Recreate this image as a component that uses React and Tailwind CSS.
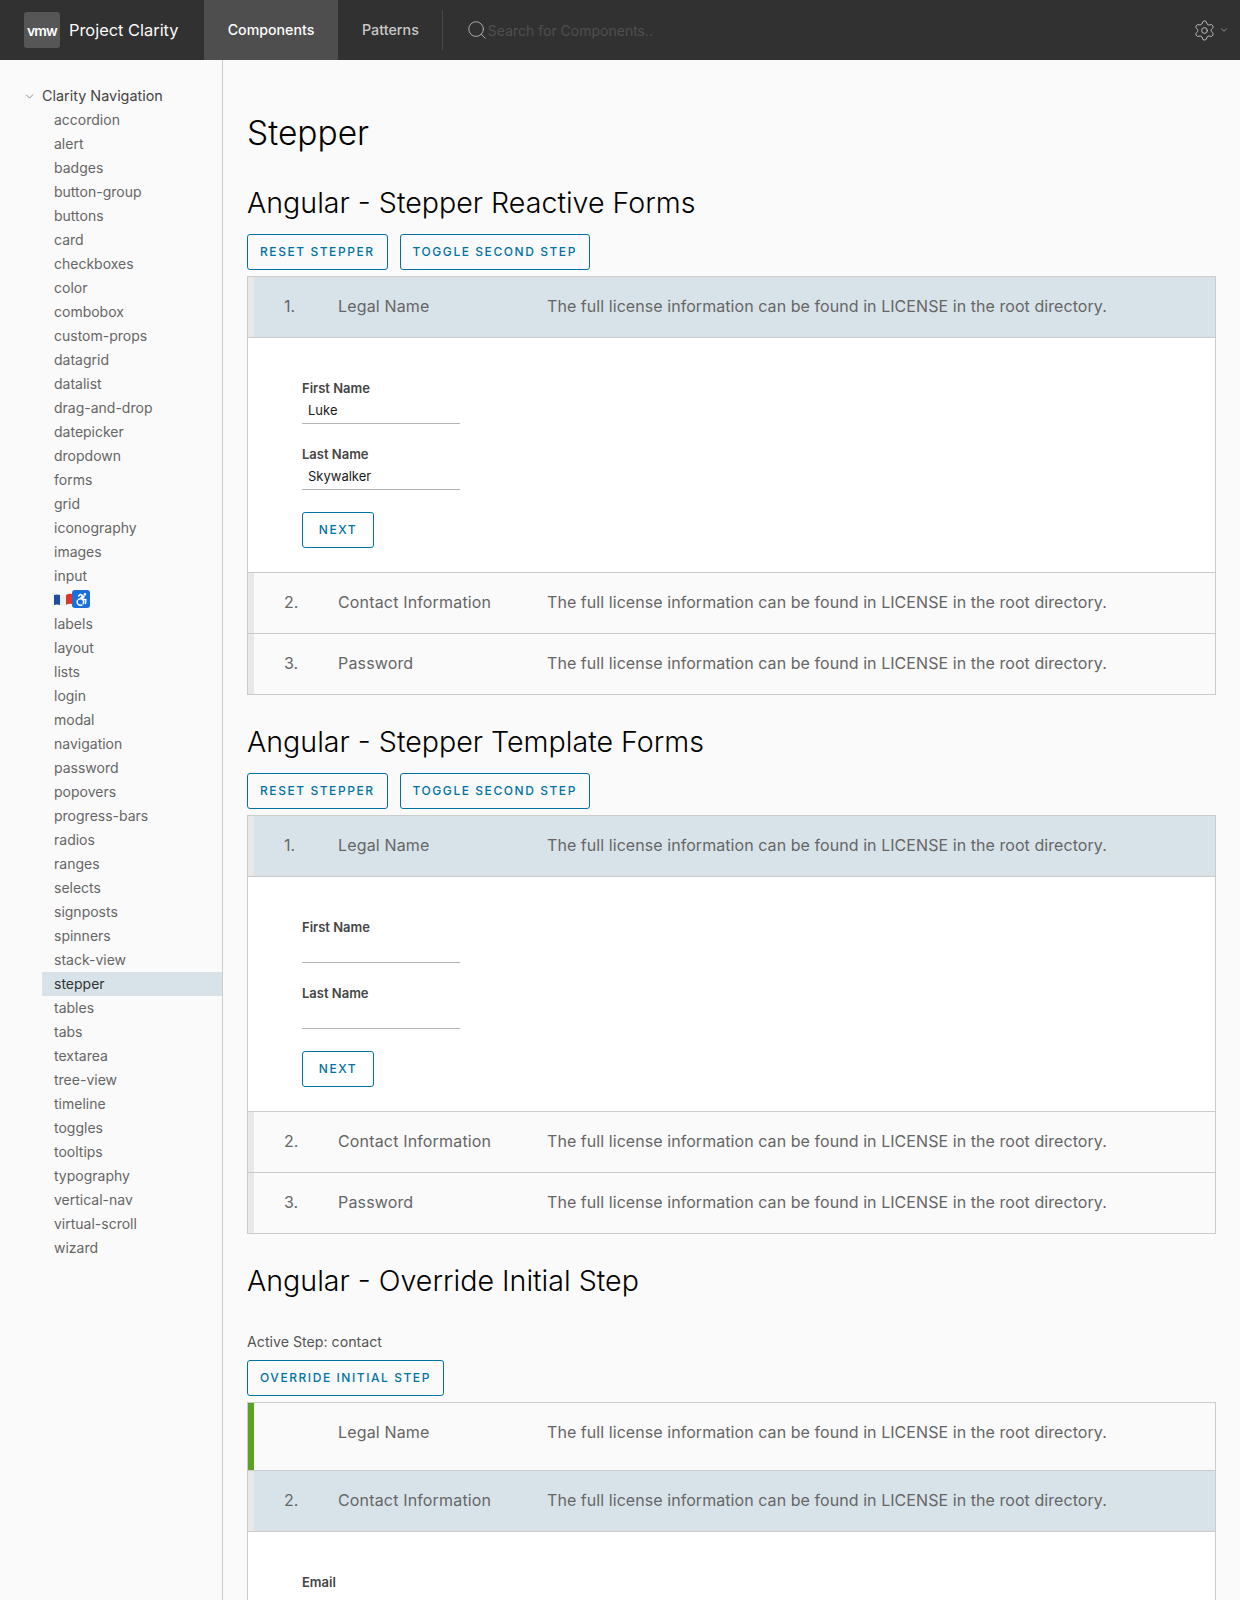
import React from 'react';
import { ChevronDown, Search, Settings } from 'lucide-react';
import { FaAccessibleIcon } from 'react-icons/fa';

const navItems = ['accordion', 'alert', 'badges', 'button-group', 'buttons', 'card', 'checkboxes', 'color', 'combobox', 'custom-props', 'datagrid', 'datalist', 'drag-and-drop', 'datepicker', 'dropdown', 'forms', 'grid', 'iconography', 'images', 'input', 'a11y', 'labels', 'layout', 'lists', 'login', 'modal', 'navigation', 'password', 'popovers', 'progress-bars', 'radios', 'ranges', 'selects', 'signposts', 'spinners', 'stack-view', 'stepper', 'tables', 'tabs', 'textarea', 'tree-view', 'timeline', 'toggles', 'tooltips', 'typography', 'vertical-nav', 'virtual-scroll', 'wizard'];

const licence = 'The full license information can be found in LICENSE in the root directory.';

const OutlineButton = ({ children, className = '' }) => (
    <button className={`h-9 px-3 border border-[#0072a3] rounded-[3px] text-[#0072a3] text-[12px] font-medium tracking-[0.13em] uppercase ${className}`}>{children}</button>
);

const StepRow = ({ num, title, active, done, tall }) => (
    <div className={`flex items-stretch border-b border-[#cccccc] last:border-b-0 last:h-[60px] ${tall ? 'h-[68px]' : 'h-[61px]'} ${active ? 'bg-[#d8e3e9]' : ''}`}>
        <div className={`w-[6px] shrink-0 ${done ? 'bg-[#5aa220]' : 'bg-[#e8e8e8]'}`}></div>
        <div className="w-[30px] shrink-0"></div>
        <div className="w-[54px] h-[58px] shrink-0 flex items-center text-[16px] text-[#666666]">{num}</div>
        <div className="w-[209px] h-[58px] shrink-0 flex items-center text-[16px] tracking-[0.01em] text-[#666666]">{title}</div>
        <div className="h-[58px] flex items-center text-[16px] tracking-[0.06px] text-[#666666]">{licence}</div>
    </div>
);

const Field = ({ label, value, last }) => (
    <div className={last ? 'mb-[22px]' : 'mb-[23px]'}>
        <label className="block text-[13px] font-semibold text-[#454545] leading-[15px] pb-px">{label}</label>
        <div className="w-[158px] h-[27px] border-b border-[#b3b3b3] pl-[6px] pt-[3px] text-[13px] leading-[20px] text-[#1a1a1a]">{value}</div>
    </div>
);

const StepContent = ({ children }) => (
    <div className="bg-white border-b border-[#cccccc] pt-[43px] pl-[54px] pb-[24px]">{children}</div>
);

const App = () => {
    return (
        <div className="h-[1600px] overflow-hidden bg-[#fafafa] font-['Inter',sans-serif]">
            <header className="h-[60px] bg-[#313131] flex items-center">
                <div className="w-9 h-9 ml-6 rounded-[3px] bg-[#565656] flex items-center justify-center text-white text-[14px] font-semibold tracking-[-0.06em]">vmw</div>
                <span className="ml-[9px] w-[135px] text-[16.4px] text-[#fafafa]">Project Clarity</span>
                <div className="h-full w-[134px] bg-[#4e4e4e] flex items-center justify-center text-[14.2px] font-medium text-white">Components</div>
                <div className="ml-6 text-[14.3px] font-medium text-[#c8c8c8]">Patterns</div>
                <div className="ml-[23px] w-px h-10 bg-[#4a4a4a]"></div>
                <Search size={22} strokeWidth={1} className="ml-[23px] text-[#b3b3b3]" />
                <span className="text-[14px] text-[#4f4f4f]">Search for Components..</span>
                <div className="ml-auto mr-[11px] flex items-center gap-[3px] text-[#c0c0c0]">
                    <Settings size={23} strokeWidth={1} />
                    <ChevronDown size={10} strokeWidth={1.5} />
                </div>
            </header>
            <div className="flex">
                <aside className="w-[223px] h-[1540px] shrink-0 border-r border-[#cccccc] pl-[42px] pt-[24px]">
                    <div className="relative h-6 flex items-center text-[14.4px] text-[#454545]">
                        <ChevronDown size={13} strokeWidth={1.25} className="absolute -left-[19px] top-[6px] text-[#565656]" />
                        Clarity Navigation
                    </div>
                    {navItems.map((item) => (
                        <div key={item} className={`h-6 pl-3 pb-[2px] flex items-center text-[14px] ${item === 'stepper' ? 'bg-[#d8e3e9] text-[#333333]' : 'text-[#666666]'}`}>
                            {item === 'a11y' ? (
                                <span className="flex items-center">
                                    <svg width="18" height="14" viewBox="0 0 18 14">
                                        <path d="M0 3 Q3 2 6 3 L6 13 Q3 12 0 13 Z" fill="#1f4e9c" />
                                        <path d="M6 3 Q9 4 12 3 L12 13 Q9 14 6 13 Z" fill="#eceef2" />
                                        <path d="M12 3 Q15 1 18 2 L18 12 Q15 11 12 13 Z" fill="#e0352b" />
                                    </svg>
                                    <span className="w-[18px] h-[18px] rounded-[3px] bg-[#1a6fd8] flex items-center justify-center">
                                        <FaAccessibleIcon size={13} className="text-white" />
                                    </span>
                                </span>
                            ) : item}
                        </div>
                    ))}
                </aside>
                <main className="flex-1 pl-6 pr-6">
                    <h1 className="mt-[51px] text-[33.5px] leading-[44px] font-light text-black">Stepper</h1>

                    <h2 className="mt-[30px] text-[28.6px] leading-[36px] font-light text-black">Angular - Stepper Reactive Forms</h2>
                    <div className="mt-[13px] flex gap-3">
                        <OutlineButton>Reset Stepper</OutlineButton>
                        <OutlineButton>Toggle Second Step</OutlineButton>
                    </div>
                    <div className="mt-[6px] border border-[#cccccc]">
                        <StepRow num="1." title="Legal Name" active />
                        <StepContent>
                            <Field label="First Name" value="Luke" />
                            <Field label="Last Name" value="Skywalker" last />
                            <OutlineButton className="w-[72px] px-0">Next</OutlineButton>
                        </StepContent>
                        <StepRow num="2." title="Contact Information" />
                        <StepRow num="3." title="Password" />
                    </div>

                    <h2 className="mt-[29px] text-[28.6px] leading-[36px] font-light text-black">Angular - Stepper Template Forms</h2>
                    <div className="mt-[13px] flex gap-3">
                        <OutlineButton>Reset Stepper</OutlineButton>
                        <OutlineButton>Toggle Second Step</OutlineButton>
                    </div>
                    <div className="mt-[6px] border border-[#cccccc]">
                        <StepRow num="1." title="Legal Name" active />
                        <StepContent>
                            <Field label="First Name" value="" />
                            <Field label="Last Name" value="" last />
                            <OutlineButton className="w-[72px] px-0">Next</OutlineButton>
                        </StepContent>
                        <StepRow num="2." title="Contact Information" />
                        <StepRow num="3." title="Password" />
                    </div>

                    <h2 className="mt-[29px] text-[28.6px] leading-[36px] font-light text-black">Angular - Override Initial Step</h2>
                    <p className="mt-[31px] text-[14.2px] leading-[24px] text-[#565656]">Active Step: contact</p>
                    <OutlineButton className="mt-[6px] block">Override Initial Step</OutlineButton>
                    <div className="mt-[6px] border border-[#cccccc]">
                        <StepRow title="Legal Name" done tall />
                        <StepRow num="2." title="Contact Information" active />
                        <StepContent>
                            <Field label="Email" value="" />
                        </StepContent>
                    </div>
                </main>
            </div>
        </div>
    );
};

export default App;
